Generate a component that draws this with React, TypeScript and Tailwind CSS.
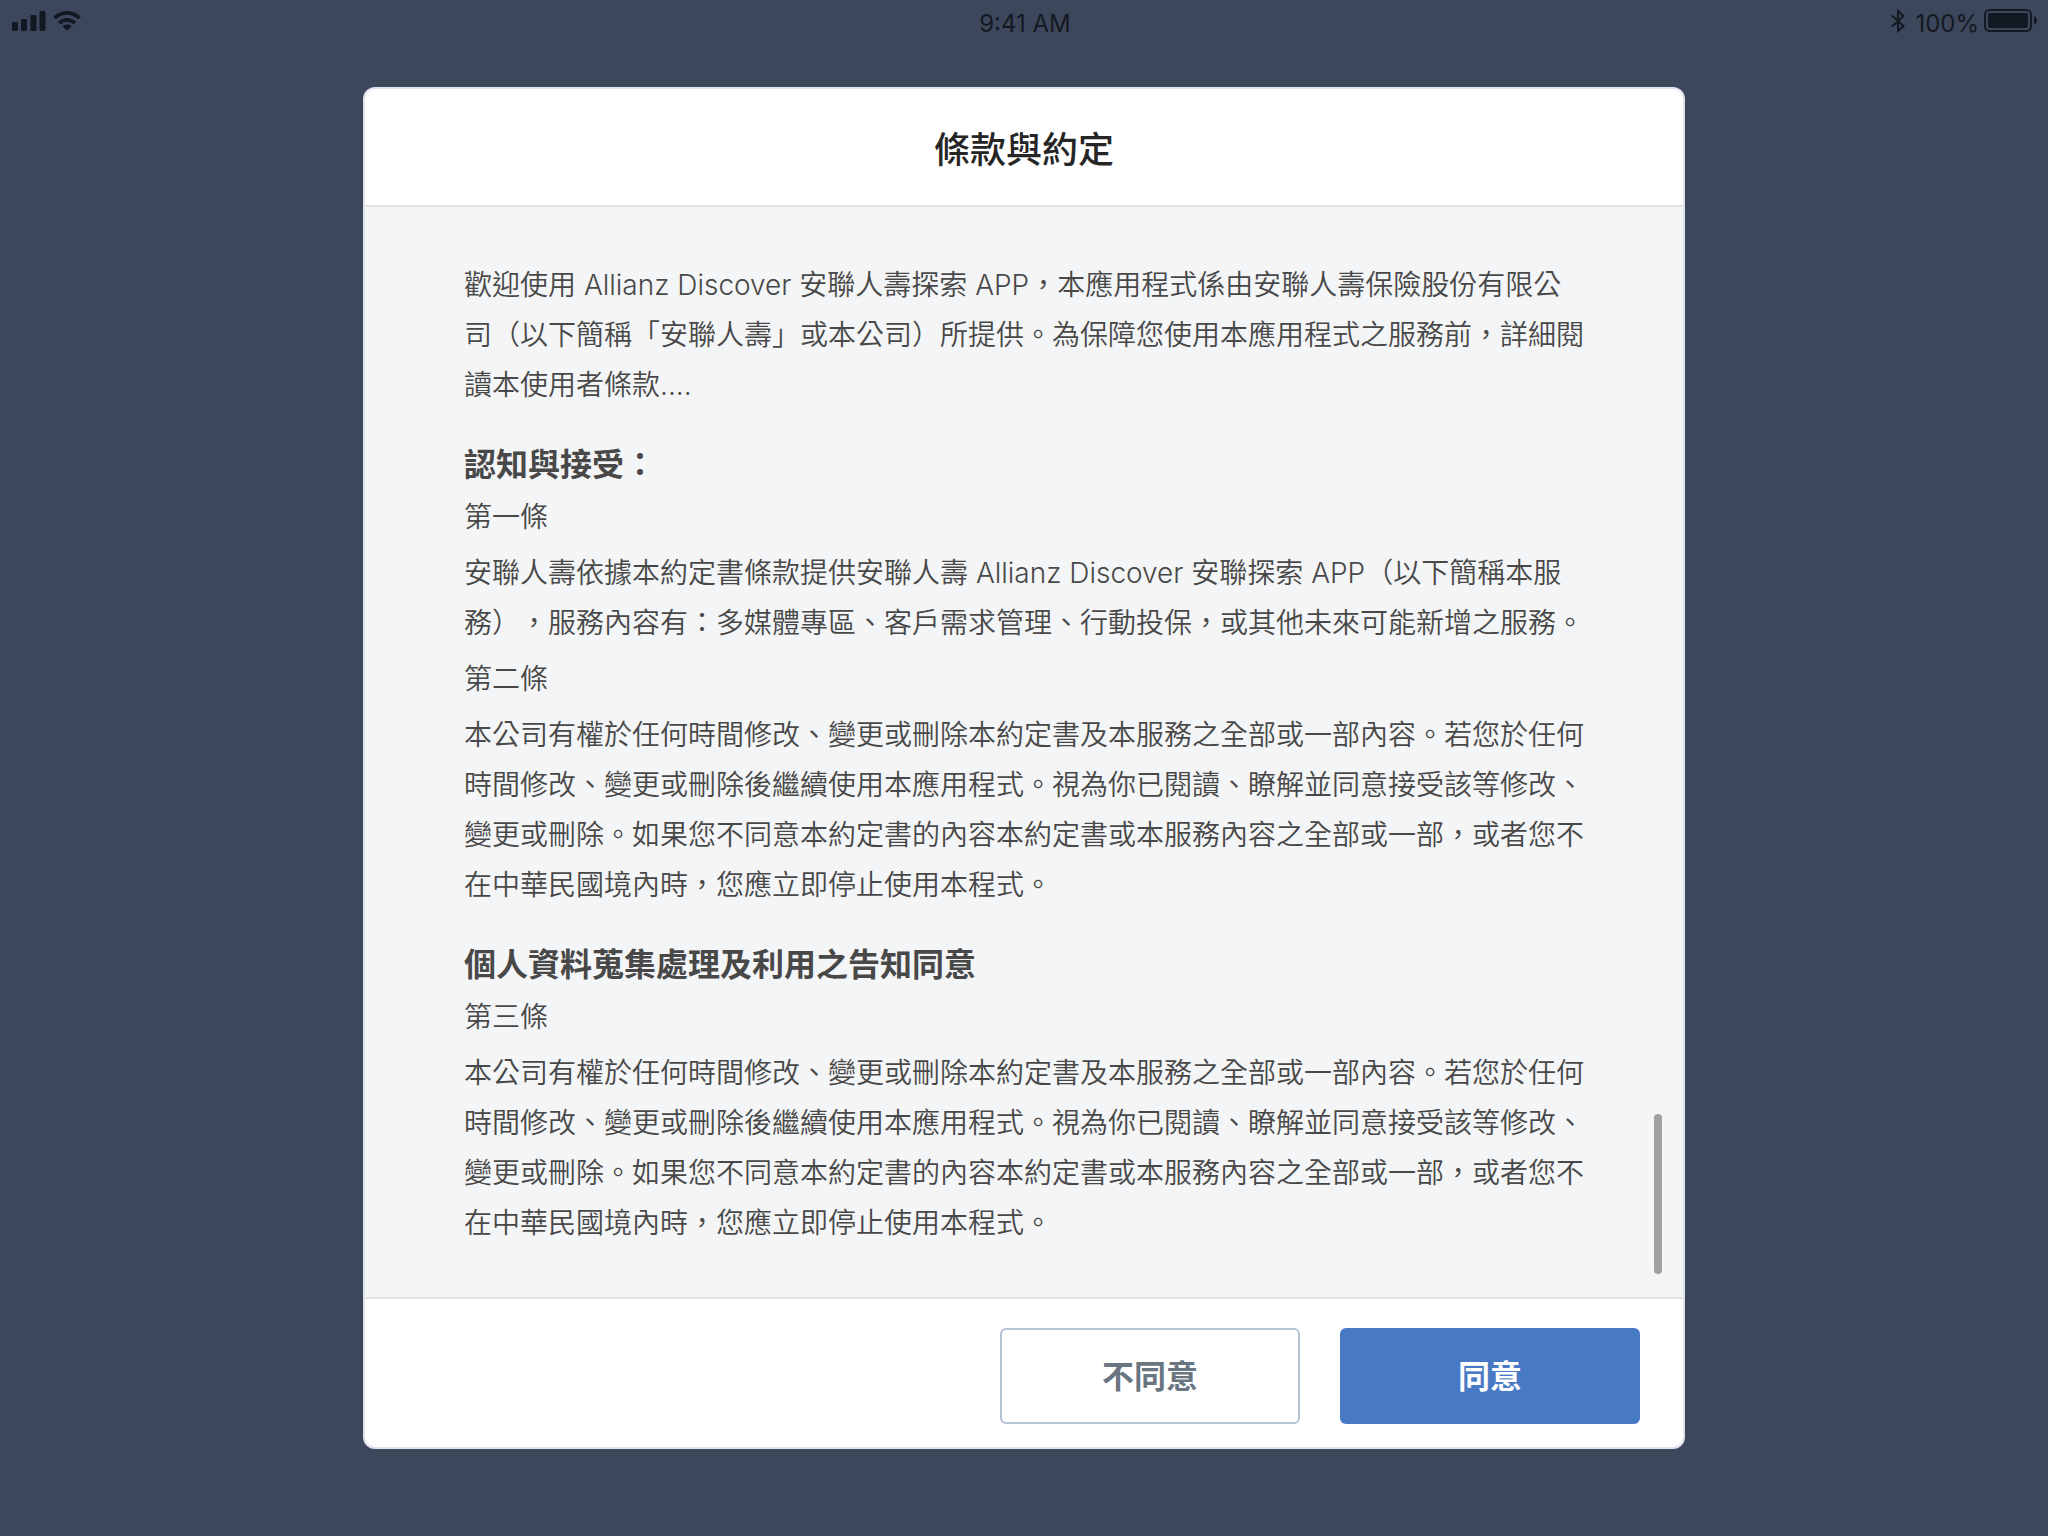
import type { ReactNode } from "react";

function SignalIcon() {
  return (
    <svg width="34" height="20" viewBox="0 0 34 20" fill="currentColor" aria-hidden="true">
      <rect x="0" y="11" width="6" height="9" rx="1.4" />
      <rect x="9" y="8" width="6" height="12" rx="1.4" />
      <rect x="18.5" y="4" width="6" height="16" rx="1.4" />
      <rect x="27.5" y="0" width="6" height="20" rx="1.4" />
    </svg>
  );
}

function WifiIcon() {
  return (
    <svg width="28" height="20" viewBox="0 0 28 20" aria-hidden="true">
      <g fill="none" stroke="currentColor" strokeWidth="3.8">
        <path d="M1.500 7.200C8.500 0.200 19.500 0.200 26.500 7.200" />
        <path d="M6.100 12.100C10.600 7.700 17.400 7.700 21.900 12.100" />
      </g>
      <path d="M14 19.800L9.400 15.300C12 13 16 13 18.600 15.300Z" fill="currentColor" />
    </svg>
  );
}

function BluetoothIcon() {
  return (
    <svg width="14" height="24" viewBox="0 0 14 24" fill="none" stroke="currentColor" strokeWidth="2" aria-hidden="true">
      <path d="M1 6.500L12.500 17L7 22V2L12.500 7L1 17.500" />
    </svg>
  );
}

function BatteryIcon() {
  return (
    <svg width="54" height="24" viewBox="0 0 54 24" fill="currentColor" aria-hidden="true">
      <rect x="1" y="1" width="46" height="21" rx="4.500" fill="none" stroke="currentColor" strokeWidth="2" />
      <rect x="4" y="4" width="40" height="15" rx="2" />
      <path d="M50 7.500C52 8 53 9.500 53 11.500C53 13.500 52 15 50 15.500Z" />
    </svg>
  );
}

function StatusBar() {
  return (
    <header className="grid h-10 grid-cols-3 items-center pr-[10px] pl-3 text-2xl leading-9 text-[#131922]">
      <div className="flex items-center gap-[7px]">
        <SignalIcon />
        <WifiIcon />
      </div>
      <time className="pt-[6px] text-center">9:41 AM</time>
      <div className="flex items-center justify-end">
        <BluetoothIcon />
        <span className="pt-[6px] pr-[5px] pl-[10px]">100%</span>
        <BatteryIcon />
      </div>
    </header>
  );
}

function Clause({ label, children }: { label: string; children: ReactNode }) {
  return (
    <section className="mb-[6px] last:mb-0">
      <h3>{label}</h3>
      <p className="mt-[6px]">{children}</p>
    </section>
  );
}

function Chapter({ title, children }: { title: string; children: ReactNode }) {
  return (
    <section className="mt-[30px]">
      <h2 className="mb-[2px] text-[32px] leading-[50px] font-bold">{title}</h2>
      {children}
    </section>
  );
}

const amendment =
  "本公司有權於任何時間修改、變更或刪除本約定書及本服務之全部或一部內容。若您於任何時間修改、變更或刪除後繼續使用本應用程式。視為你已閱讀、瞭解並同意接受該等修改、變更或刪除。如果您不同意本約定書的內容本約定書或本服務內容之全部或一部，或者您不在中華民國境內時，您應立即停止使用本程式。";

export default function App() {
  return (
    <div
      lang="zh-TW"
      className="min-h-screen bg-[#3d475b] pb-[87px] font-['Inter','Noto_Sans_CJK_TC',sans-serif]"
    >
      <StatusBar />
      <main
        role="dialog"
        aria-modal="true"
        aria-labelledby="terms-title"
        className="mx-auto mt-[47px] w-full max-w-[1322px] overflow-hidden rounded-xl border-2 border-[#dfe4ec] bg-white"
      >
        <div className="flex h-[118px] items-center justify-center border-b-2 border-[#e2e5e9] pt-[6px]">
          <h1 id="terms-title" className="text-4xl leading-[50px] font-medium text-[#262626]">
            條款與約定
          </h1>
        </div>

        <div className="relative bg-[#f4f5f7] px-[99px] pt-[53px] pb-[49px] text-[28px] leading-[50px] font-[350] text-[#484848] [text-spacing-trim:space-all]">
          <p>
            歡迎使用 Allianz Discover 安聯人壽探索 APP，本應用程式係由安聯人壽保險股份有限公司（以下簡稱「安聯人壽」或本公司）所提供。為保障您使用本應用程式之服務前，詳細閱讀本使用者條款....
          </p>
          <Chapter title="認知與接受：">
            <Clause label="第一條">
              安聯人壽依據本約定書條款提供安聯人壽 Allianz Discover 安聯探索 APP（以下簡稱本服務），服務內容有：多媒體專區、客戶需求管理、行動投保，或其他未來可能新增之服務。
            </Clause>
            <Clause label="第二條">{amendment}</Clause>
          </Chapter>
          <Chapter title="個人資料蒐集處理及利用之告知同意">
            <Clause label="第三條">{amendment}</Clause>
          </Chapter>
          <span className="absolute right-[21px] bottom-[23px] h-40 w-2 rounded-full bg-[#a1a1a1]" />
        </div>

        <div className="flex justify-end gap-10 border-t-2 border-[#e2e5e9] pt-[29px] pr-[43px] pb-[23px] text-[32px] font-bold">
          <button
            type="button"
            className="h-24 w-[300px] rounded-md border-2 border-[#b5c3d4] bg-white pt-[2px] text-[#6a7582]"
          >
            不同意
          </button>
          <button type="button" className="h-24 w-[300px] rounded-md bg-[#4779c4] pt-[2px] text-white">
            同意
          </button>
        </div>
      </main>
    </div>
  );
}
